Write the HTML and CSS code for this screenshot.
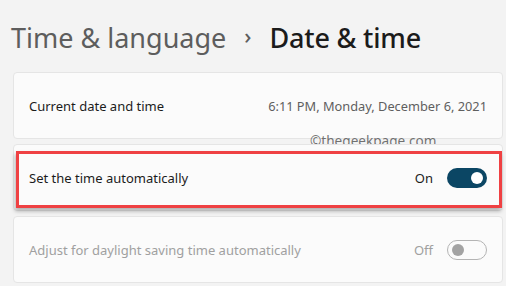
FILE: index.html
```html
<!DOCTYPE html>
<html>
<head>
  <meta charset="UTF-8" />
  <title>Date &amp; time</title>
  <link rel="stylesheet" href="styles.css">
</head>
<body>
  <div class="page">
    <h1 class="crumbs">
      <span class="parent">Time &amp; language</span>
      <span class="sep">&#8250;</span>
      <span class="current">Date &amp; time</span>
    </h1>

    <div class="card">
      <span class="label">Current date and time</span>
      <span class="value">6:11 PM, Monday, December 6, 2021</span>
      <span class="watermark">&copy;thegeekpage.com</span>
    </div>

    <div class="card">
      <span class="label">Set the time automatically</span>
      <div class="control">
        <span class="state">On</span>
        <span class="toggle on"><span class="knob"></span></span>
      </div>
      <div class="highlight"></div>
    </div>

    <div class="card disabled">
      <span class="label">Adjust for daylight saving time automatically</span>
      <div class="control">
        <span class="state">Off</span>
        <span class="toggle"><span class="knob"></span></span>
      </div>
    </div>
  </div>
</body>
</html>
```

FILE: styles.css
```css
html, body {
  margin: 0;
  padding: 0;
}

body {
  background-color: #f3f3f3;
  font-family: "Noto Sans", "Open Sans", sans-serif;
  color: #1b1b1b;
  width: 506px;
  height: 286px;
  overflow: hidden;
}

.page {
  padding: 0 3px 0 13px;
  display: flex;
  flex-direction: column;
  gap: 5px;
}

.crumbs {
  margin: 0;
  height: 72px;
  display: flex;
  align-items: center;
  gap: 18px;
  margin-left: -2px;
  font-size: 27px;
  font-weight: 500;
  padding-top: 2px;
  box-sizing: border-box;
}

.parent {
  color: #5d5d5d;
  font-weight: 400;
}

.sep {
  font-size: 22px;
  color: #5d5d5d;
  position: relative;
  top: -2px;
}

.current {
  color: #1b1b1b;
  font-weight: 500;
  letter-spacing: -0.2px;
}

.crumbs + .card {
  margin-top: -5px;
}

.card {
  position: relative;
  height: 67px;
  background-color: #fbfbfb;
  border: 1px solid #e5e5e5;
  border-radius: 4px;
  box-sizing: border-box;
  display: flex;
  align-items: center;
  justify-content: space-between;
  padding: 0 15px 0 15px;
  font-size: 13px;
}

.value {
  color: #5f5f5f;
  font-size: 12.8px;
}

.watermark {
  position: absolute;
  left: 296px;
  top: 58px;
  font-size: 13.6px;
  color: rgba(90, 90, 90, 0.85);
}

.control {
  display: flex;
  align-items: center;
  gap: 14px;
}

.state {
  font-size: 13px;
}

.toggle {
  width: 40px;
  height: 20px;
  border-radius: 10px;
  box-sizing: border-box;
  display: flex;
  align-items: center;
  padding: 0 4px;
}

.toggle.on {
  background-color: #0b4664;
  justify-content: flex-end;
}

.toggle.on .knob {
  width: 12px;
  height: 12px;
  border-radius: 50%;
  background-color: #ffffff;
}

.disabled {
  color: #a0a0a0;
}

.disabled .toggle {
  border: 1px solid #b4b4b4;
}

.disabled .knob {
  width: 12px;
  height: 12px;
  border-radius: 50%;
  background-color: #a3a3a3;
}

.highlight {
  position: absolute;
  left: 2px;
  top: 6px;
  width: 486px;
  height: 57px;
  border: 3px solid #ef4143;
  box-sizing: border-box;
  box-shadow: -1px 3px 4px rgba(0, 0, 0, 0.3);
}
```
